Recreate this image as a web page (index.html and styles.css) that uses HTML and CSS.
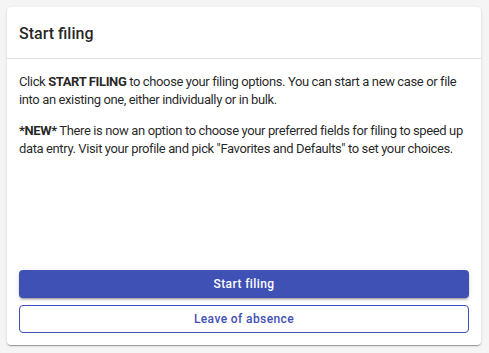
FILE: index.html
```html
<!DOCTYPE html>
<html lang="en">
<head>
  <title>Start filing</title>
  <meta charset="utf-8" />
  <link rel="stylesheet" href="styles.css">
</head>
<body>
  <div class="card">
    <div class="card-header">Start filing</div>
    <div class="card-body">
      <p>Click <b>START FILING</b> to choose your filing options. You can start a new case or file into an existing one, either individually or in bulk.</p>
      <p><b>*NEW*</b> There is now an option to choose your preferred fields for filing to speed up data entry. Visit your profile and pick "Favorites and Defaults" to set your choices.</p>
    </div>
    <div class="card-actions">
      <button class="btn btn-primary">Start filing</button>
      <button class="btn btn-outline">Leave of absence</button>
    </div>
  </div>
</body>
</html>
```

FILE: styles.css
```css
html, body{
  height: 100%;
}
body{
  margin: 0;
  padding: 7px 8px 8px 7px;
  box-sizing: border-box;
  background-color: #f5f5f5;
  font-family: Roboto, "Liberation Sans", sans-serif;
  color: rgba(0, 0, 0, 0.87);
}
.card{
  display: flex;
  flex-direction: column;
  height: 338px;
  background-color: #fff;
  border-radius: 4px;
  box-shadow: 0 2px 1px -1px rgba(0,0,0,0.2), 0 1px 1px 0 rgba(0,0,0,0.14), 0 1px 3px 0 rgba(0,0,0,0.12);
}
.card-header{
  height: 50px;
  padding: 1px 12px 0 12px;
  display: flex;
  align-items: center;
  border-bottom: 1px solid #e0e0e0;
  font-size: 16px;
  font-weight: 500;
}
.card-body{
  flex: 1;
  padding: 14px 8px 0 12px;
  font-size: 13px;
  letter-spacing: -0.38px;
  line-height: 18px;
}
.card-body p{
  margin: 0 0 13px 0;
}
.card-body b{
  font-weight: 700;
}
.card-actions{
  display: flex;
  flex-direction: column;
  gap: 7px;
  padding: 0 12px 12px 12px;
}
.btn{
  height: 28px;
  border-radius: 4px;
  font-family: Roboto, "Liberation Sans", sans-serif;
  font-size: 12px;
  font-weight: 500;
  letter-spacing: 0.4px;
  cursor: pointer;
}
.btn-primary{
  border: none;
  background-color: #3f51b5;
  color: #fff;
  box-shadow: 0 3px 1px -2px rgba(0,0,0,0.2), 0 2px 2px 0 rgba(0,0,0,0.14), 0 1px 5px 0 rgba(0,0,0,0.12);
}
.btn-outline{
  border: 1px solid #3f51b5;
  background-color: #fff;
  color: #3f51b5;
}
```
